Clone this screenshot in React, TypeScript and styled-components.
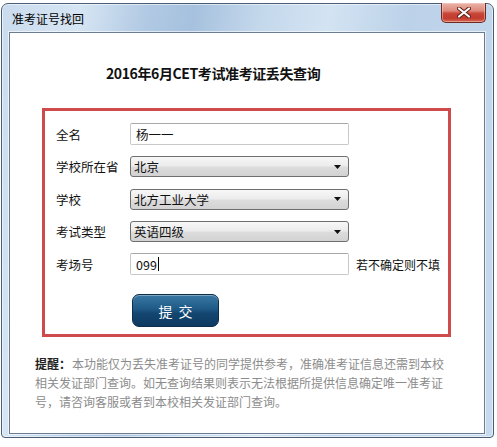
import styled, { createGlobalStyle } from 'styled-components'

const GlobalStyle = createGlobalStyle`
  html, body {
    margin: 0;
    padding: 0;
    background: #ffffff;
  }
  body {
    font-family: "Noto Sans CJK SC", "Noto Sans", sans-serif;
  }
`

const Window = styled.div`
  box-sizing: border-box;
  width: 493px;
  height: 435px;
  margin: 3px 0 0 1px;
  border: 1px solid #4a5d76;
  border-radius: 7px 7px 4px 4px;
  padding: 0 8px 3px 7px;
  display: flex;
  flex-direction: column;
  background: linear-gradient(100deg, #c9dbee 0%, #d6e5f3 14%, #b1c9e3 26%, #a6c1de 34%, #c4d8ec 46%, #d3e3f2 58%, #bcd2e9 72%, #c8daed 100%);
  box-shadow: inset 0 0 0 1px rgba(255, 255, 255, 0.55);
`

const TitleBar = styled.div`
  height: 28px;
  display: flex;
  justify-content: space-between;
  align-items: flex-start;
  padding-left: 3px;
  margin-right: -1px;
`

const Title = styled.div`
  font-size: 12px;
  line-height: 12px;
  margin-top: 9px;
  color: #000;
`

const CloseButton = styled.div`
  box-sizing: border-box;
  width: 45px;
  height: 20px;
  margin-top: -1px;
  border: 1px solid #6e2a22;
  border-top: none;
  border-radius: 0 0 5px 5px;
  background: linear-gradient(180deg, #eab3a8 0%, #de8a7c 40%, #c9463a 55%, #c23b2f 80%, #d86a54 100%);
  box-shadow: inset 0 0 0 1px rgba(255, 220, 210, 0.45);
  display: flex;
  align-items: center;
  justify-content: center;
`

const Content = styled.div`
  flex: 1;
  background: #ffffff;
  border: 1px solid #6a7c92;
  box-shadow: 0 0 0 1px rgba(255, 255, 255, 0.6);
  display: flex;
  flex-direction: column;
`

const Heading = styled.div`
  margin-top: 30px;
  padding-left: 96px;
  font-size: 14px;
  line-height: 20px;
  font-weight: 700;
  letter-spacing: -0.4px;
  color: #111;
`

const FormBox = styled.div`
  box-sizing: border-box;
  width: 409px;
  height: 229px;
  margin: 25px 0 0 32px;
  border: 3px solid #cf4a4a;
  padding: 12px 0 7px 11px;
  display: flex;
  flex-direction: column;
  gap: 10.5px;
`

const Row = styled.div`
  display: flex;
  align-items: center;
  height: 22px;
`

const Label = styled.div`
  width: 74px;
  font-size: 12.5px;
  color: #111;
`

const TextField = styled.div`
  box-sizing: border-box;
  width: 219px;
  height: 22px;
  border: 1px solid #c9c9c9;
  border-top-color: #a8a8a8;
  border-radius: 2px;
  padding-left: 5px;
  display: flex;
  align-items: center;
  font-size: 12.5px;
  color: #111;
`

const Caret = styled.span`
  display: inline-block;
  width: 1px;
  height: 14px;
  background: #000;
  margin-left: 1px;
`

const SelectBox = styled.div`
  box-sizing: border-box;
  width: 219px;
  height: 21px;
  border: 1px solid #6f6f6f;
  border-radius: 3px;
  padding: 0 7px 0 3px;
  display: flex;
  align-items: center;
  justify-content: space-between;
  font-size: 12.5px;
  color: #111;
  background: linear-gradient(180deg, #f7f7f7 0%, #ececec 45%, #dcdcdc 55%, #d2d2d2 100%);
`

const Hint = styled.div`
  margin-left: 7px;
  font-size: 12px;
  color: #111;
`

const SubmitButton = styled.button`
  box-sizing: border-box;
  width: 87px;
  height: 33px;
  margin: 8.5px 0 0 76px;
  border: 1px solid #0d2d48;
  border-radius: 7px;
  background: linear-gradient(180deg, #3a78a4 0%, #1f5a86 45%, #134670 60%, #0e3a60 100%);
  box-shadow: inset 0 1px 0 rgba(255, 255, 255, 0.35);
  color: #ffffff;
  font-family: "Noto Sans CJK SC", sans-serif;
  font-size: 14px;
  letter-spacing: 6px;
  text-indent: 6px;
  padding: 0;
`

const Notice = styled.p`
  width: 412px;
  margin: 17px 0 0 25px;
  font-size: 12px;
  line-height: 19px;
  color: #8c8c8c;
`

const NoticeTitle = styled.b`
  display: inline-block;
  color: #222;
  margin-right: 1px;
`

const Arrow = () => (
  <svg width="7" height="4" viewBox="0 0 7 4">
    <path d="M0 0 H7 L3.5 4 Z" fill="#111" />
  </svg>
)

const CloseIcon = () => (
  <svg width="14" height="11" viewBox="0 0 14 11">
    <path d="M2 1.5 L12 9.5 M12 1.5 L2 9.5" stroke="#5a1d16" strokeWidth="4" strokeLinecap="round" />
    <path d="M2 1.5 L12 9.5 M12 1.5 L2 9.5" stroke="#ffffff" strokeWidth="2.2" strokeLinecap="round" />
  </svg>
)

const selects = [
  { label: '学校所在省', value: '北京' },
  { label: '学校', value: '北方工业大学' },
  { label: '考试类型', value: '英语四级' },
]

export default function App() {
  return (
    <>
      <GlobalStyle />
      <Window>
        <TitleBar>
          <Title>准考证号找回</Title>
          <CloseButton>
            <CloseIcon />
          </CloseButton>
        </TitleBar>
        <Content>
          <Heading>2016年6月CET考试准考证丢失查询</Heading>
          <FormBox>
            <Row>
              <Label>全名</Label>
              <TextField>杨一一</TextField>
            </Row>
            {selects.map((s) => (
              <Row key={s.label}>
                <Label>{s.label}</Label>
                <SelectBox>
                  <span>{s.value}</span>
                  <Arrow />
                </SelectBox>
              </Row>
            ))}
            <Row>
              <Label>考场号</Label>
              <TextField>
                099
                <Caret />
              </TextField>
              <Hint>若不确定则不填</Hint>
            </Row>
            <SubmitButton>提交</SubmitButton>
          </FormBox>
          <Notice>
            <NoticeTitle>提醒：</NoticeTitle>
            <span>本功能仅为丢失准考证号的同学提供参考，准确准考证信息还需到本校</span>
            <span>相关发证部门查询。如无查询结果则表示无法根据所提供信息确定唯一准考证号，请咨询客服或者到本校相关发证部门查询。</span>
          </Notice>
        </Content>
      </Window>
    </>
  )
}
